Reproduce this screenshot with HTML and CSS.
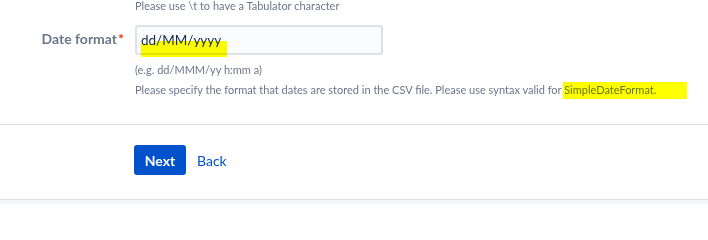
FILE: index.html
```html
<!DOCTYPE html>
<html lang="en">
<head>
<meta charset="utf-8">
<title>CSV import - Date format</title>
<link rel="stylesheet" href="styles.css">
</head>
<body>
<div class="page">
  <form class="form">
    <div class="field-group">
      <div class="field-label"></div>
      <div class="field-body">
        <div class="description first">Please use \t to have a Tabulator character</div>
      </div>
    </div>
    <div class="field-group date-row">
      <label class="field-label">Date format<span class="req">*</span></label>
      <div class="field-body">
        <div class="text-field">
          <span class="value">dd/MM/yyyy</span>
          <span class="marker marker-input"></span>
        </div>
        <div class="description help">(e.g. dd/MMM/yy h:mm a)</div>
        <div class="description">Please specify the format that dates are stored in the CSV file. Please use syntax valid for <span class="hl">SimpleDateFormat.<span class="marker marker-text"></span></span></div>
      </div>
    </div>
    <div class="buttons-container">
      <div class="field-label"></div>
      <div class="buttons">
        <button type="button" class="btn-primary">Next</button>
        <a href="#" class="btn-link">Back</a>
      </div>
    </div>
  </form>
  <div class="footer-strip"></div>
</div>
</body>
</html>
```
FILE: styles.css
```css
html, body {
  margin: 0;
  padding: 0;
  background: #ffffff;
}
body {
  font-family: Lato, "Open Sans", sans-serif;
  color: #172b4d;
  overflow: hidden;
}
.page {
  width: 708px;
  height: 204px;
  overflow: hidden;
}
.form {
  margin: 0;
  border-bottom: 1px solid #dfe1e6;
}
.field-group {
  display: flex;
}
.field-label {
  width: 125px;
  flex: none;
  text-align: right;
  box-sizing: border-box;
  padding-right: 1px;
}
.field-body {
  margin-left: 10px;
  flex: 1;
}
.description {
  font-size: 11px;
  line-height: 20px;
  color: #6b778c;
  white-space: nowrap;
}
.description.first {
  line-height: 12px;
}
.date-row {
  margin-top: 13px;
  padding-bottom: 24px;
  border-bottom: 1px solid #dfe1e6;
}
.date-row .field-label {
  font-size: 14px;
  font-weight: 700;
  color: #6b778c;
  line-height: 28px;
}
.req {
  color: #de350b;
  font-size: 14px;
  margin-left: 1px;
}
.text-field {
  position: relative;
  width: 248px;
  height: 30px;
  box-sizing: border-box;
  border: 2px solid #dfe1e6;
  border-radius: 3px;
  background: #fafbfc;
  padding: 0 4px;
  font-size: 13.5px;
  line-height: 26px;
  color: #172b4d;
}
.help {
  margin-top: 5px;
}
.marker {
  position: absolute;
  background: #ffff00;
  mix-blend-mode: multiply;
}
.marker-input {
  left: 4px;
  top: 14px;
  width: 86px;
  height: 16px;
  clip-path: polygon(0 3px, 16% 3px, 17% 0, 100% 0, 100% 100%, 0 100%);
}
.hl {
  position: relative;
}
.marker-text {
  left: -1px;
  right: -31px;
  top: -1.5px;
  bottom: -2.5px;
}
.buttons-container {
  display: flex;
  padding-top: 20px;
  padding-bottom: 24px;
}
.buttons {
  margin-left: 9px;
  display: flex;
  align-items: center;
}
.btn-primary {
  height: 30px;
  width: 52px;
  border: 0;
  border-radius: 3px;
  background: #0052cc;
  color: #ffffff;
  font-family: Lato, "Open Sans", sans-serif;
  font-weight: 700;
  font-size: 14px;
  padding: 0;
  cursor: pointer;
}
.btn-link {
  margin-left: 11px;
  color: #0052cc;
  font-size: 14px;
  text-decoration: none;
}
.footer-strip {
  height: 10px;
  background: #f4f5f7;
}
```
